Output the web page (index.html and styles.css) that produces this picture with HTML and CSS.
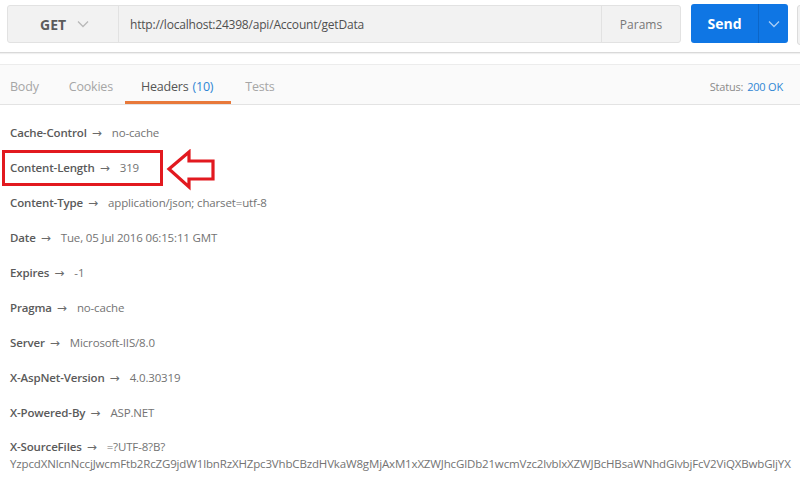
FILE: index.html
```html
<!DOCTYPE html>
<html>
<head>
<meta charset="utf-8">
<link rel="stylesheet" href="styles.css">
</head>
<body>
<div class="topbar">
  <div class="group">
    <div class="method">GET
      <svg class="chev" width="12" height="8" viewBox="0 0 12 8"><path d="M1 1.5 L6 6.5 L11 1.5" fill="none" stroke="#b8b8b8" stroke-width="1.3"/></svg>
    </div>
    <div class="url">http://localhost:24398/api/Account/getData</div>
    <div class="params">Params</div>
  </div>
  <div class="send">
    <span class="send-label">Send</span>
    <span class="send-drop"><svg width="12" height="8" viewBox="0 0 12 8"><path d="M1 1.5 L6 6.5 L11 1.5" fill="none" stroke="#a9cdf5" stroke-width="1.3"/></svg></span>
  </div>
  <div class="edge"></div>
</div>
<div class="gap"></div>
<div class="tabbar">
  <div class="tabs">
    <span class="tab t-body">Body</span>
    <span class="tab t-cookies">Cookies</span>
    <span class="tab active">Headers <span class="count">(10)</span></span>
    <span class="tab t-tests">Tests</span>
  </div>
  <div class="status">Status: <span class="ok">200 OK</span></div>
</div>
<div class="headers">
  <div class="row"><span class="k">Cache-Control</span><span class="ar">→</span><span class="v">no-cache</span></div>
  <div class="row"><span class="k">Content-Length</span><span class="ar">→</span><span class="v">319</span></div>
  <div class="row"><span class="k">Content-Type</span><span class="ar">→</span><span class="v">application/json; charset=utf-8</span></div>
  <div class="row"><span class="k">Date</span><span class="ar">→</span><span class="v">Tue, 05 Jul 2016 06:15:11 GMT</span></div>
  <div class="row"><span class="k">Expires</span><span class="ar">→</span><span class="v">-1</span></div>
  <div class="row"><span class="k">Pragma</span><span class="ar">→</span><span class="v">no-cache</span></div>
  <div class="row"><span class="k">Server</span><span class="ar">→</span><span class="v">Microsoft-IIS/8.0</span></div>
  <div class="row"><span class="k">X-AspNet-Version</span><span class="ar">→</span><span class="v">4.0.30319</span></div>
  <div class="row"><span class="k">X-Powered-By</span><span class="ar">→</span><span class="v">ASP.NET</span></div>
  <div class="row last"><span class="k">X-SourceFiles</span><span class="ar">→</span><span class="v">=?UTF-8?B?</span></div>
  <div class="cont">YzpcdXNlcnNccjJwcmFtb2RcZG9jdW1lbnRzXHZpc3VhbCBzdHVkaW8gMjAxM1xXZWJhcGlDb21wcmVzc2lvblxXZWJBcHBsaWNhdGlvbjFcV2ViQXBwbGljYX</div>
</div>
<div class="redbox"></div>
<svg class="arrow" width="52" height="42" viewBox="0 0 52 42"><polygon points="3,20 23,3 23,12 47,12 47,30 23,30 23,38" fill="#fff" stroke="#e2191f" stroke-width="3.2" stroke-linejoin="miter"/></svg>
</body>
</html>
```
FILE: styles.css
```css
html, body {
  margin: 0;
  padding: 0;
  background: #fff;
  width: 800px;
  height: 480px;
  overflow: hidden;
  font-family: "Open Sans", "Noto Sans", sans-serif;
}
.topbar {
  display: flex;
  align-items: flex-start;
  height: 53px;
  padding: 5px 0 0 7px;
  box-sizing: border-box;
  border-bottom: 1px solid #d9d9d9;
  box-shadow: 0 1px 1px rgba(0,0,0,0.06);
  background: #fff;
}
.group {
  flex: 0 0 674px;
  display: flex;
  height: 38px;
  border: 1px solid #e2e2e2;
  border-radius: 3px;
  background: #f2f2f2;
  box-sizing: border-box;
}
.method {
  flex: 0 0 111px;
  display: flex;
  align-items: center;
  padding-left: 32px;
  box-sizing: border-box;
  font-weight: 700;
  font-size: 14px;
  color: #5c5c5c;
  border-right: 1px solid #e2e2e2;
}
.chev { margin-left: 11px; }
.url {
  flex: 1;
  display: flex;
  align-items: center;
  padding-left: 11px;
  font-size: 12px;
  letter-spacing: -0.2px;
  color: #505050;
  border-right: 1px solid #e2e2e2;
}
.params {
  flex: 0 0 78px;
  display: flex;
  align-items: center;
  justify-content: center;
  font-size: 12px;
  color: #777;
}
.send {
  flex: 0 0 97px;
  margin-left: 10px;
  height: 39px;
  margin-top: -1px;
  background: #0f76e4;
  border-radius: 3px;
  display: flex;
  color: #fff;
}
.send-label {
  flex: 0 0 67px;
  display: flex;
  align-items: center;
  justify-content: center;
  font-weight: 700;
  font-size: 14px;
  border-right: 1px solid #0c66c8;
}
.send-drop {
  flex: 1;
  display: flex;
  align-items: center;
  justify-content: center;
}
.edge {
  flex: 0 0 10px;
  margin-left: 9px;
  height: 38px;
  border: 1px solid #dcdcdc;
  border-radius: 3px;
  background: #f2f2f2;
}
.gap { height: 11px; }
.tabbar {
  display: flex;
  justify-content: space-between;
  align-items: stretch;
  height: 41px;
  background: #fafafa;
  border-top: 1px solid #ececec;
  border-bottom: 1px solid #e3e3e3;
  box-sizing: border-box;
}
.tabs {
  display: flex;
  padding-left: 10px;
}
.tab {
  display: flex;
  align-items: center;
  font-size: 12.5px;
  letter-spacing: -0.2px;
  color: #a6a6a6;
  border-bottom: 3px solid transparent;
  padding-top: 6px;
}
.t-body { margin-right: 30px; }
.t-cookies { margin-right: 12px; }
.tab.active {
  color: #555;
  border-bottom-color: #e8793a;
  padding-left: 16px;
  padding-right: 18px;
  margin-right: 14px;
}
.count { color: #2f86d4; margin-left: 4px; }
.status {
  display: flex;
  align-items: center;
  padding-top: 3px;
  font-size: 11px;
  letter-spacing: -0.2px;
  color: #8a8a8a;
  padding-right: 17px;
}
.ok { color: #2f86d4; margin-left: 4px; }
.headers {
  padding: 10px 0 0 10px;
  width: 790px;
  overflow: hidden;
}
.row {
  height: 35px;
  display: flex;
  align-items: center;
  font-size: 11.5px;
  letter-spacing: -0.15px;
  white-space: nowrap;
}
.row .k {
  font-weight: 600;
  color: #5a5a5a;
}
.ar {
  font-family: "DejaVu Sans", sans-serif;
  font-size: 12px;
  letter-spacing: 0;
  color: #6a6a6a;
  margin: 0 10px 0 5px;
}
.row .v { color: #737373; }
.row.last {
  height: auto;
  padding-top: 9px;
}
.cont {
  font-size: 11.5px;
  letter-spacing: -0.15px;
  color: #737373;
  white-space: nowrap;
  margin-top: 2px;
}
.redbox {
  position: absolute;
  left: 2px;
  top: 150px;
  width: 161px;
  height: 36px;
  border: 3px solid #e2191f;
  box-sizing: border-box;
}
.arrow {
  position: absolute;
  left: 166px;
  top: 149px;
}
```
